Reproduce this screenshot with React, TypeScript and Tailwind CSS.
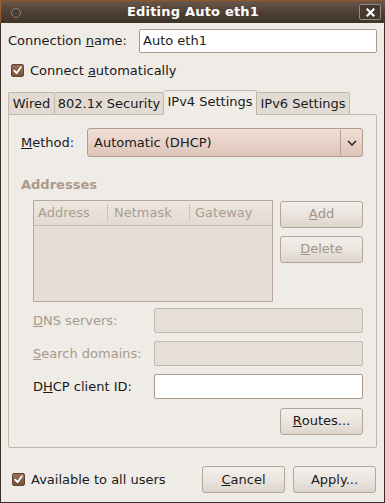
import { ReactNode } from "react";

const font = { fontFamily: '"DejaVu Sans", "Liberation Sans", sans-serif' };

function Check() {
  return (
    <div className="w-[13px] h-[13px] rounded-[2px] border border-[#5e4232] bg-gradient-to-b from-[#9a6e56] to-[#7a5240] flex items-center justify-center">
      <svg width="9" height="9" viewBox="0 0 9 9">
        <path d="M1.2 4.6 L3.6 7.2 L7.8 1.2" stroke="#fff" strokeWidth="1.8" fill="none" strokeLinecap="round" strokeLinejoin="round" />
      </svg>
    </div>
  );
}

function Button({ children, className = "" }: { children: ReactNode; className?: string }) {
  return (
    <div
      className={`w-[83px] h-[27px] rounded-[3px] border border-[#b3a598] bg-gradient-to-b from-[#f3efeb] via-[#ebe5df] to-[#ddd5cc] flex items-center justify-center text-[13px] ${className}`}
    >
      {children}
    </div>
  );
}

function Field({ white = false }: { white?: boolean }) {
  return (
    <div
      className={`w-[209px] h-[25px] rounded-[2px] border ${
        white ? "bg-white border-[#a89a8d]" : "bg-[#e6dfd7] border-[#c4b8ac]"
      }`}
    />
  );
}

export default function App() {
  return (
    <div style={font} className="w-[385px] h-[503px] bg-[#3a2e26] flex flex-col text-[13px] text-[#1a1a1a] overflow-hidden">
      {/* title bar */}
      <div className="relative h-[23px] bg-gradient-to-b from-[#6a584b] via-[#4f4035] to-[#3f332a] flex items-center justify-center border-t border-l border-[#c8702a]/60">
        <div className="absolute left-[10px] top-[7px] w-[10px] h-[10px] rounded-full border border-[#8f8378] bg-[#4a3c32]" />
        <span className="text-white font-bold text-[13px] tracking-[0.2px]">Editing Auto eth1</span>
        <div className="absolute right-[4px] top-[3px] w-[22px] h-[16px] rounded-[2px] border border-[#988a7e] bg-[#45382f] flex items-center justify-center">
          <svg width="9" height="9" viewBox="0 0 9 9">
            <path d="M1.5 1.5 L7.5 7.5 M7.5 1.5 L1.5 7.5" stroke="#fff" strokeWidth="2.2" strokeLinecap="square" />
          </svg>
        </div>
      </div>

      {/* body */}
      <div className="flex-1 mx-[1px] mb-[1px] bg-[#efebe7] pl-[7px] pr-[7px] flex flex-col">
        <div className="mt-[6px] h-[24px] flex items-center">
          <span className="w-[131px]">
            Connection <u>n</u>ame:
          </span>
          <div className="flex-1 h-[24px] bg-white border border-[#a89a8d] rounded-[2px] flex items-center pl-[3px]">
            Auto eth1
          </div>
        </div>

        <div className="mt-[11px] h-[13px] flex items-center gap-[6px] pl-[3px]">
          <Check />
          <span>
            Connect <u>a</u>utomatically
          </span>
        </div>

        {/* tabs */}
        <div className="mt-[12px] h-[25px] flex items-end">
          <div className="w-[47px] h-[22px] bg-[#e2dbd3] border border-b-0 border-[#c3b6aa] rounded-t-[2px] flex items-center justify-center">Wired</div>
          <div className="w-[109px] h-[22px] bg-[#e2dbd3] border border-b-0 border-l-0 border-[#c3b6aa] rounded-t-[2px] flex items-center justify-center">802.1x Security</div>
          <div className="w-[93px] h-[25px] bg-[#efebe7] border border-b-0 border-l-0 border-[#c3b6aa] rounded-t-[2px] flex items-center justify-center relative z-10 mb-[-1px] pb-[2px]">IPv4 Settings</div>
          <div className="w-[93px] h-[22px] bg-[#e2dbd3] border border-b-0 border-l-0 border-[#c3b6aa] rounded-t-[2px] flex items-center justify-center">IPv6 Settings</div>
        </div>

        {/* panel */}
        <div className="h-[334px] border border-[#c3b6aa] rounded-b-[2px] rounded-tr-[2px] pl-[12px] pr-[13px] pt-[13px] flex flex-col">
          <div className="h-[29px] flex items-center">
            <span className="w-[66px]">
              <u>M</u>ethod:
            </span>
            <div className="flex-1 h-[29px] rounded-[3px] border border-[#b49a8c] bg-gradient-to-b from-[#f0dfd7] via-[#e8d2c8] to-[#dcc4b8] flex items-center">
              <span className="flex-1 pl-[6px]">Automatic (DHCP)</span>
              <div className="w-px h-[25px] bg-[#b8a194]" />
              <div className="w-[21px] flex items-center justify-center">
                <svg width="10" height="6" viewBox="0 0 10 6">
                  <path d="M1 1 L5 5 L9 1" stroke="#2a2a2a" strokeWidth="1.6" fill="none" />
                </svg>
              </div>
            </div>
          </div>

          <div className="mt-[18px] font-bold text-[#ab9a8b]">Addresses</div>

          <div className="mt-[5px] pl-[12px] flex gap-[7px]">
            <div className="w-[241px] h-[102px] border border-[#b9a899] bg-[#e6ded6] flex flex-col">
              <div className="h-[25px] border-b border-[#c8bbae] bg-gradient-to-b from-[#ece6e0] to-[#e3dbd3] flex items-center text-[#ab9d8f]">
                <div className="w-[74px] pl-[4px] border-r border-[#cdbfb2] h-[17px] flex items-center">Address</div>
                <div className="w-[82px] pl-[6px] border-r border-[#cdbfb2] h-[17px] flex items-center">Netmask</div>
                <div className="flex-1 pl-[5px] h-[17px] flex items-center">Gateway</div>
              </div>
            </div>
            <div className="flex flex-col gap-[8px] pt-[1px] text-[#a29585]">
              <Button>
                <u>A</u>dd
              </Button>
              <Button>
                <u>D</u>elete
              </Button>
            </div>
          </div>

          <div className="pl-[12px] mt-[7px] flex flex-col gap-[9px]">
            <div className="h-[24px] flex items-center justify-between text-[#a89a8b]">
              <span>
                <u>D</u>NS servers:
              </span>
              <Field />
            </div>
            <div className="h-[24px] flex items-center justify-between text-[#a89a8b]">
              <span>
                <u>S</u>earch domains:
              </span>
              <Field />
            </div>
            <div className="h-[24px] flex items-center justify-between">
              <span>
                D<u>H</u>CP client ID:
              </span>
              <Field white />
            </div>
          </div>

          <div className="mt-[9px] flex justify-end">
            <Button>
              <u>R</u>outes...
            </Button>
          </div>
        </div>

        <div className="mt-[18px] flex items-center">
          <div className="flex items-center gap-[6px] pl-[4px] flex-1">
            <Check />
            <span>Available to all users</span>
          </div>
          <Button className="mr-[8px]">
            <u>C</u>ancel
          </Button>
          <Button className="mr-[1px]">Apply...</Button>
        </div>
      </div>
    </div>
  );
}
